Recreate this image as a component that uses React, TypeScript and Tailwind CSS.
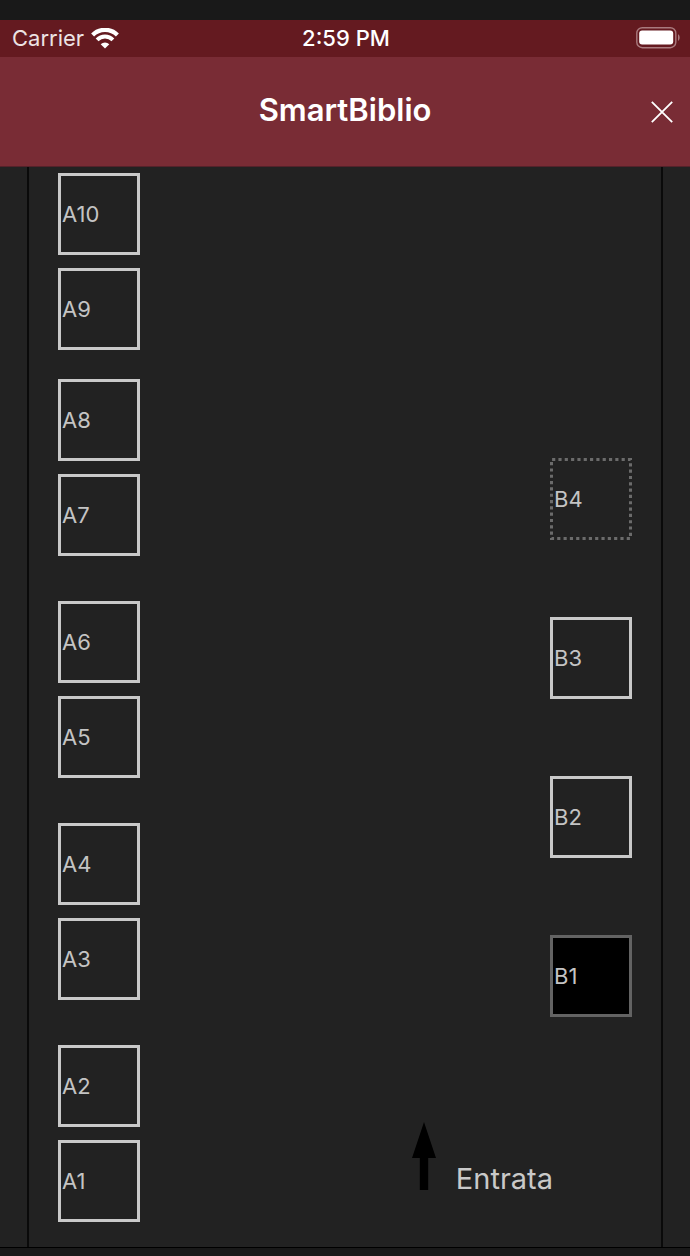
import React from "react";

type SeatState = "free" | "reserved" | "taken";

interface SeatProps {
  id: string;
  state?: SeatState;
}

const seatStyles: Record<SeatState, string> = {
  free: "border-[3px] border-[#c9c9c9]",
  reserved: "border-[3px] border-transparent",
  taken: "border-[3px] border-[#636363] bg-black",
};

function Seat({ id, state = "free" }: SeatProps) {
  return (
    <button
      type="button"
      className={`relative flex size-[82px] shrink-0 items-center pl-px text-left text-[22px] leading-7 text-[#c4c4c4] ${seatStyles[state]}`}
    >
      {state === "reserved" && (
        <svg
          className="absolute -left-[3px] -top-[3px] size-[82px]"
          viewBox="0 0 82 82"
          fill="none"
          aria-hidden="true"
        >
          <path
            d="M1.5 1.5H80.5V80.5H1.5Z"
            stroke="#6b6b6b"
            strokeWidth="3"
            strokeDasharray="3.16 3.16"
            strokeDashoffset="-0.6"
          />
        </svg>
      )}
      {id}
    </button>
  );
}

const leftPairs: string[][] = [
  ["A8", "A7"],
  ["A6", "A5"],
  ["A4", "A3"],
  ["A2", "A1"],
];

const rightSeats: SeatProps[] = [
  { id: "B4", state: "reserved" },
  { id: "B3" },
  { id: "B2" },
  { id: "B1", state: "taken" },
];

function SeatPair({ ids }: { ids: string[] }) {
  return (
    <div className="flex flex-col gap-[13px]">
      {ids.map((id) => (
        <Seat key={id} id={id} />
      ))}
    </div>
  );
}

function WifiIcon() {
  return (
    <svg className="h-[21px] w-7" viewBox="0 0 28 21" aria-hidden="true">
      <g fill="none" stroke="#fff">
        <path d="M1.6 6.9A17.6 17.6 0 0 1 26.4 6.9" strokeWidth="4.2" />
        <path d="M6.1 11.8A11.2 11.2 0 0 1 21.9 11.8" strokeWidth="4" />
      </g>
      <path d="M14 20.6L9.7 16.3A6 6 0 0 1 18.3 16.3Z" fill="#fff" />
    </svg>
  );
}

function BatteryIcon() {
  return (
    <svg className="h-[22px] w-11" viewBox="0 0 44 22" aria-hidden="true">
      <rect x="0.8" y="0.7" width="39" height="20" rx="5.5" fill="none" stroke="#a97a7e" strokeWidth="1.4" />
      <rect x="3.2" y="3.5" width="34" height="14" rx="3" fill="#fff" />
      <path d="M42 7.2C44.2 8.2 44.2 13 42 14Z" fill="#a97a7e" />
    </svg>
  );
}

export default function App() {
  return (
    <div className="min-h-screen bg-[#191919] pt-5 font-['Inter','Liberation_Sans',sans-serif]">
      <div className="grid h-[37px] grid-cols-3 items-center bg-[#641a20] pb-px pl-3 pr-[10px] text-[22px] leading-7 text-white">
        <div className="flex items-center gap-[7px] text-[#ece3e4]">
          <span>Carrier</span>
          <WifiIcon />
        </div>
        <div className="text-center font-medium">2:59 PM</div>
        <div className="flex justify-end">
          <BatteryIcon />
        </div>
      </div>

      <header className="grid h-[110px] grid-cols-[1fr_auto_1fr] items-center border-b border-[#54222a] bg-[#792c35] px-4 text-white">
        <h1 className="col-start-2 pb-1 text-[31px] font-semibold leading-9">SmartBiblio</h1>
        <button type="button" aria-label="Chiudi" className="justify-self-end pt-px">
          <svg className="size-6" viewBox="0 0 24 24" fill="none" aria-hidden="true">
            <path d="M1.8 1.8L22.2 22.2M22.2 1.8L1.8 22.2" stroke="#fff" strokeWidth="1.8" />
          </svg>
        </button>
      </header>

      <main className="border-b border-black bg-[#222222] px-[27px]">
        <div className="flex justify-between border-x-2 border-[#0a0a0a] px-[29px]">
          <div className="flex flex-col gap-[45px] pb-[25px] pt-[6px]">
            <div className="flex flex-col gap-[29px]">
              <SeatPair ids={["A10", "A9"]} />
              <SeatPair ids={leftPairs[0]} />
            </div>
            {leftPairs.slice(1).map((ids) => (
              <SeatPair key={ids[0]} ids={ids} />
            ))}
          </div>

          <div className="flex flex-col items-end justify-end pb-[57px]">
            <div className="flex flex-col gap-[77px]">
              {rightSeats.map((seat) => (
                <Seat key={seat.id} {...seat} />
              ))}
            </div>
            <div className="mt-[105px] flex items-end gap-5 pr-[79px]">
              <svg className="h-[68px] w-6" viewBox="0 0 24 68" aria-hidden="true">
                <path d="M12 0L24 36H16.2V68H7.8V36H0Z" fill="#000" />
              </svg>
              <span className="-mb-[7px] text-[29px] leading-9 text-[#c9c9c9]">Entrata</span>
            </div>
          </div>
        </div>
      </main>
    </div>
  );
}
